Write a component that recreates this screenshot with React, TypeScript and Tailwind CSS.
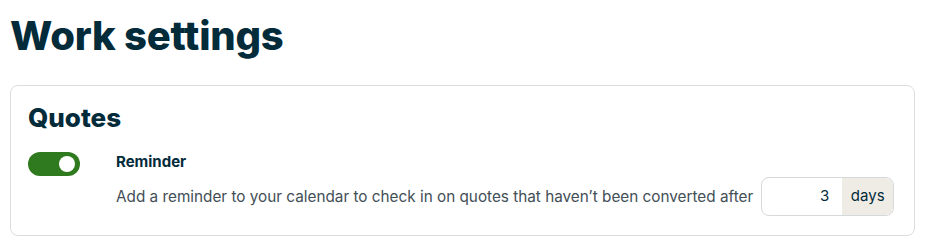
import React from "react";

export default function App() {
  return (
    <div
      className="w-[928px] h-[248px] bg-white pl-[10px] pr-[13px] pt-[12px]"
      style={{ fontFamily: "Inter, 'Noto Sans', sans-serif" }}
    >
      <h1 className="text-[40px] leading-[48px] font-extrabold text-[#032b3a] tracking-[-0.2px]">
        Work settings
      </h1>
      <div className="mt-[25px] border border-[#dadddf] rounded-[8px] px-[17px] pt-[16px] pb-[19px]">
        <h2 className="text-[26px] leading-[32px] font-extrabold text-[#032b3a]">Quotes</h2>
        <div className="mt-[18px] flex items-start">
          <button className="w-[52px] h-[24px] rounded-full bg-[#2f7a1e] flex items-center justify-end pr-[5px] shrink-0">
            <span className="w-[16px] h-[16px] rounded-full bg-white block" />
          </button>
          <div className="ml-[36px] flex-1">
            <div className="text-[15px] leading-[20px] font-bold text-[#032b3a]">Reminder</div>
            <div className="mt-[5px] flex items-center gap-[8px]">
              <span className="text-[15.3px] leading-[20px] text-[#424e56]">
                Add a reminder to your calendar to check in on quotes that haven’t been converted after
              </span>
              <div className="flex h-[39px] w-[133px] border border-[#d5d9db] rounded-[8px] overflow-hidden">
                <div className="w-[80px] flex items-center justify-end pr-[13px] text-[15px] text-[#032b3a]">3</div>
                <div className="flex-1 bg-[#efece6] flex items-center justify-center text-[15px] text-[#032b3a]">
                  days
                </div>
              </div>
            </div>
          </div>
        </div>
      </div>
    </div>
  );
}
